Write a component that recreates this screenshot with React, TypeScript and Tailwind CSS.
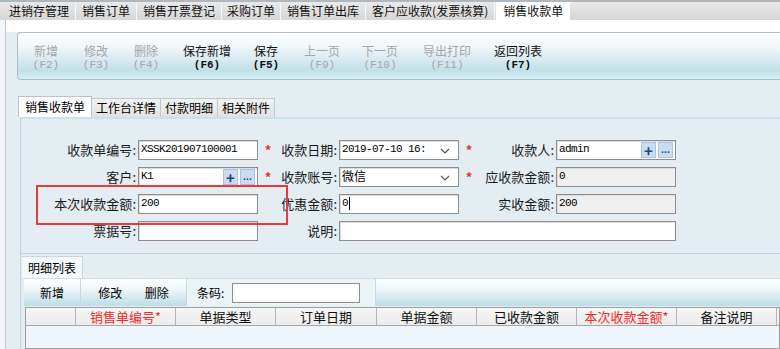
import React from "react";

const mono = "font-['Liberation_Mono','DejaVu_Sans_Mono',monospace]";

const topTabs = [
  { label: "进销存管理", cls: "pl-[9px] pr-[6px]" },
  { label: "销售订单", cls: "px-[6px]" },
  { label: "销售开票登记", cls: "px-[6px]" },
  { label: "采购订单", cls: "px-[5px]" },
  { label: "销售订单出库", cls: "px-[6px]" },
  { label: "客户应收款(发票核算)", cls: "px-[6px]" },
];

const tools = [
  { label: "新增", key: "(F2)", w: "w-[50px]", on: false },
  { label: "修改", key: "(F3)", w: "w-[50px]", on: false },
  { label: "删除", key: "(F4)", w: "w-[50px]", on: false },
  { label: "保存新增", key: "(F6)", w: "w-[72px]", on: true },
  { label: "保存", key: "(F5)", w: "w-[46px]", on: true },
  { label: "上一页", key: "(F9)", w: "w-[66px]", on: false },
  { label: "下一页", key: "(F10)", w: "w-[50px]", on: false },
  { label: "导出打印", key: "(F11)", w: "w-[84px]", on: false },
  { label: "返回列表", key: "(F7)", w: "w-[58px]", on: true },
];

const formTabs = ["工作台详情", "付款明细", "相关附件"];

const columns = [
  { label: "", w: "w-[50px]", red: false },
  { label: "销售单编号*", w: "w-[100px]", red: true },
  { label: "单据类型", w: "w-[100px]", red: false },
  { label: "订单日期", w: "w-[101px]", red: false },
  { label: "单据金额", w: "w-[100px]", red: false },
  { label: "已收款金额", w: "w-[100px]", red: false },
  { label: "本次收款金额*", w: "w-[100px]", red: true },
  { label: "备注说明", w: "w-[100px]", red: false },
];

const Star = () => (
  <span className="flex h-[20px] w-[20px] items-center justify-center text-[13px] font-bold text-[#f02828]">
    *
  </span>
);

const Label = ({ text, w }: { text: string; w: string }) => (
  <span className={`${w} shrink-0 text-right text-[13px] leading-[20px] text-[#1a1a1a]`}>
    {text}:
  </span>
);

const PickButtons = () => (
  <div className="absolute right-[2px] top-[1px] flex gap-[2px]">
    <span className="flex h-[16px] w-[15px] items-center justify-center border border-[#a9c3e4] bg-[#c9dcf4] text-[15px] font-bold leading-none text-[#27466f]">
      +
    </span>
    <span className="flex h-[16px] w-[15px] items-end justify-center border border-[#a9c3e4] bg-[#c9dcf4] pb-[3px] text-[9px] font-bold leading-none text-[#27466f]">
      ...
    </span>
  </div>
);

const Input = ({
  value,
  w = "w-[120px]",
  gray = false,
  cjk = false,
  pick = false,
  caret = false,
  select = false,
}: {
  value?: string;
  w?: string;
  gray?: boolean;
  cjk?: boolean;
  pick?: boolean;
  caret?: boolean;
  select?: boolean;
}) => (
  <div
    className={`relative ml-[2px] h-[20px] ${w} shrink-0 border border-[#8d8d8d] ${
      gray ? "bg-[#efefef]" : "bg-white"
    } shadow-[inset_1px_1px_0_#dcdcdc]`}
  >
    <span
      className={`flex h-[16px] items-center pl-[2px] text-black ${
        cjk ? "text-[12px]" : `${mono} text-[11px] tracking-[-0.6px]`
      }`}
    >
      {value}
      {caret && <span className="ml-[1px] h-[13px] w-[1px] bg-black" />}
    </span>
    {pick && <PickButtons />}
    {select && (
      <svg className="absolute right-[8px] top-[7px]" width="10" height="6" viewBox="0 0 10 6">
        <polyline points="1,1 5,5 9,1" fill="none" stroke="#555" strokeWidth="1.2" />
      </svg>
    )}
  </div>
);

const Row = ({ children }: { children: React.ReactNode }) => (
  <div className="flex h-[20px] items-center">{children}</div>
);

export default function App() {
  return (
    <div className="flex h-[349px] w-[780px] flex-col overflow-hidden bg-[#f2f6f8] font-['Noto_Sans_CJK_SC','Noto_Sans',sans-serif] text-black">
      {/* top page tabs */}
      <div className="flex h-[20px] shrink-0 border-t-2 border-[#aeb8be] bg-[linear-gradient(to_bottom,#e9e9e9,#d6d6d6)]">
        {topTabs.map((t) => (
          <span
            key={t.label}
            className={`${t.cls} border-r border-[#f6f6f6] text-[12px] leading-[18px] text-[#111]`}
          >
            {t.label}
          </span>
        ))}
        <span className="ml-[1px] bg-white px-[7px] text-[12px] leading-[18px] text-[#111]">销售收款单</span>
      </div>

      <div className="ml-[5px] flex flex-1 flex-col border-l border-[#bccbd3] bg-[#e4eef2]">
        <div className="h-[12px] shrink-0 bg-white" />

        {/* main toolbar */}
        <div className="ml-[11px] flex h-[48px] shrink-0 items-center rounded-l-[4px] border-y border-l border-[#b0bfc6] bg-[linear-gradient(to_bottom,#ffffff_0%,#eef7fa_30%,#c2dfe8_82%,#d5f2fa_100%)] pl-[3px]">
          {tools.map((t) => (
            <div
              key={t.label}
              className={`${t.w} flex shrink-0 flex-col items-center pt-[1px] ${t.on ? "text-[#111]" : "text-[#a6a6a6]"}`}
            >
              <span className="text-[12px] leading-[17px]">{t.label}</span>
              <span className={`${mono} text-[11px] leading-[12px] ${t.on ? "font-bold" : ""}`}>{t.key}</span>
            </div>
          ))}
        </div>

        {/* form tabs */}
        <div className="ml-[12px] mt-[16px] flex h-[21px] shrink-0 items-end">
          <span className="h-[21px] border border-b-0 border-[#b8c4ca] bg-white px-[6px] text-[12px] leading-[20px]">
            销售收款单
          </span>
          {formTabs.map((t) => (
            <span
              key={t}
              className="h-[19px] border-r border-t border-[#c0c8cc] bg-[linear-gradient(to_bottom,#f2f2f2,#e2e2e2)] px-[4px] text-[12px] leading-[18px]"
            >
              {t}
            </span>
          ))}
        </div>

        {/* form panel */}
        <div className="relative ml-[14px] flex h-[136px] shrink-0 flex-col gap-[7px] border-l border-t-2 border-[#c9e3ec] border-l-[#c0d4dc] pt-[21px]">
          <Row>
            <Label text="收款单编号" w="w-[115px]" />
            <Input value="XSSK201907100001" />
            <Star />
            <Label text="收款日期" w="w-[59px]" />
            <Input value="2019-07-10 16:" w="w-[120px]" select />
            <Star />
            <Label text="收款人" w="w-[75px]" />
            <Input value="admin" pick />
          </Row>
          <Row>
            <Label text="客户" w="w-[115px]" />
            <Input value="K1" pick />
            <Star />
            <Label text="收款账号" w="w-[59px]" />
            <Input value="微信" cjk select />
            <Star />
            <Label text="应收款金额" w="w-[75px]" />
            <Input value="0" gray />
          </Row>
          <Row>
            <Label text="本次收款金额" w="w-[115px]" />
            <Input value="200" />
            <span className="w-[20px] shrink-0" />
            <Label text="优惠金额" w="w-[59px]" />
            <Input value="0" caret />
            <span className="w-[20px] shrink-0" />
            <Label text="实收金额" w="w-[75px]" />
            <Input value="200" gray />
          </Row>
          <Row>
            <Label text="票据号" w="w-[115px]" />
            <Input />
            <span className="w-[20px] shrink-0" />
            <Label text="说明" w="w-[59px]" />
            <Input w="w-[337px]" />
          </Row>

          {/* highlight annotation */}
          <div className="pointer-events-none absolute left-[15px] top-[66px] h-[40px] w-[252px] border-2 border-[#e8393d]" />
        </div>

        {/* detail list */}
        <div className="ml-[14px] flex flex-1 flex-col border-l border-t border-[#c0d4dc] pt-[2px]">
          <div className="flex h-[22px] shrink-0 items-end pl-[1px]">
            <span className="h-[22px] border-r border-t border-[#cad6dc] bg-[#f4f8fa] px-[6px] text-[12px] leading-[21px]">
              明细列表
            </span>
          </div>

          <div className="ml-[3px] flex h-[28px] shrink-0 items-center border-t border-[#d4dee2] bg-[linear-gradient(to_bottom,#ffffff_0%,#eef7fa_35%,#bddde6_100%)] text-[12px]">
            <span className="flex h-full w-[57px] items-center justify-center border-r border-[#c8d8de]">新增</span>
            <span className="flex h-full w-[106px] items-center justify-around border-r border-[#c8d8de] px-[6px]">
              <span>修改</span>
              <span>删除</span>
            </span>
            <span className="flex h-full w-[189px] items-center border-r border-[#c8d8de] bg-[#eaf4f7] pl-[10px]">
              条码:
              <span className="ml-[8px] h-[20px] w-[128px] border border-[#8d8d8d] bg-white" />
            </span>
          </div>

          <div className="ml-[4px] mt-[1px] flex flex-1 flex-col border border-[#9f9f9f] bg-[#eef6fc]">
            <div className="flex h-[18px] shrink-0 border-b border-[#a8a8a8] bg-[linear-gradient(to_bottom,#f6f6f6,#ececec)]">
              {columns.map((c, i) => (
                <span
                  key={i}
                  className={`${c.w} shrink-0 border-r border-[#b4b4b4] text-center text-[13px] leading-[17px] ${
                    c.red ? "text-[#f52a2a]" : "text-[#111]"
                  }`}
                >
                  {c.label}
                </span>
              ))}
            </div>
          </div>
        </div>
      </div>
    </div>
  );
}
